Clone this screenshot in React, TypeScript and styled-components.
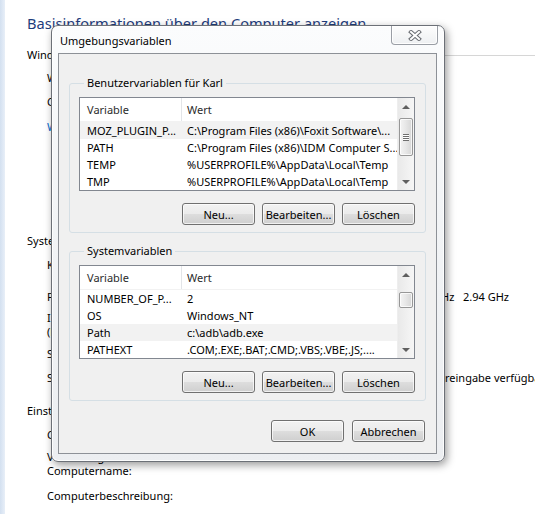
import React from 'react';
import styled, { createGlobalStyle } from 'styled-components';

const GlobalStyle = createGlobalStyle`
  html, body { margin: 0; padding: 0; background: #fff; }
  body {
    font-family: "Noto Sans", "Open Sans", sans-serif;
    font-size: 11px;
    color: #000;
  }
  * { box-sizing: border-box; }
`;

/* ---------- background: Control Panel "System" page ---------- */

const Page = styled.div`
  position: relative;
  display: flex;
  width: 535px;
  height: 514px;
  overflow: hidden;
  background: #fff;
`;

const NavStrip = styled.div`
  width: 5px;
  flex: none;
  background: linear-gradient(to right, #d3e0f0, #e8eff8);
`;

const Main = styled.main`
  flex: 1;
  min-width: 0;
  display: flex;
  flex-direction: column;
  padding: 13px 0 0 22px;
`;

const Heading = styled.h1`
  margin: 0;
  font-size: 14.6px;
  font-weight: normal;
  line-height: 20px;
  color: #1e3c7c;
  white-space: nowrap;
`;

const SectionTitle = styled.div<{ $mt: number; $rule?: boolean }>`
  margin-top: ${(p) => p.$mt}px;
  display: flex;
  align-items: center;
  line-height: 14px;
  white-space: nowrap;
  &::after {
    content: '';
    flex: 1;
    margin: 1px 0 0 8px;
    border-top: ${(p) => (p.$rule ? '1px solid #d6d6d6' : '0')};
  }
`;

const PlainLine = styled.div<{ $mt: number; $link?: boolean }>`
  margin-top: ${(p) => p.$mt}px;
  padding-left: 20px;
  line-height: 14px;
  white-space: nowrap;
  color: ${(p) => (p.$link ? '#0066cc' : '#000')};
`;

const InfoRow = styled.div<{ $mt: number }>`
  margin-top: ${(p) => p.$mt}px;
  padding-left: 20px;
  display: grid;
  grid-template-columns: 150px 312px;
  line-height: 14px;
`;

const Label = styled.div``;

const Value = styled.div<{ $end?: boolean; $link?: boolean; $indent?: number }>`
  display: flex;
  white-space: pre;
  padding-left: ${(p) => p.$indent ?? 0}px;
  justify-content: ${(p) => (p.$end ? 'flex-end' : 'flex-start')};
  color: ${(p) => (p.$link ? '#0066cc' : '#000')};
`;

/* ---------- dialog window ---------- */

const Window = styled.section`
  position: absolute;
  left: 51px;
  top: 25px;
  width: 394px;
  display: flex;
  flex-direction: column;
  padding: 0 7px 7px 6px;
  border: 1px solid #6c7077;
  border-radius: 7px;
  background: linear-gradient(180deg, #fbfcfd 0%, #f2f4f6 45%, #eceef1 100%);
  box-shadow: 2px 3px 9px rgba(0, 0, 0, 0.4), inset 0 0 0 1px rgba(255, 255, 255, 0.85);
`;

const TitleBar = styled.header`
  height: 27px;
  flex: none;
  display: flex;
  align-items: flex-start;
  justify-content: space-between;
`;

const Title = styled.div`
  padding: 8px 0 0 2px;
  line-height: 14px;
`;

const CloseButton = styled.div`
  width: 47px;
  height: 19px;
  margin-right: -1px;
  display: flex;
  align-items: center;
  justify-content: center;
  border: 1px solid #9a9ea5;
  border-top: 0;
  border-radius: 0 0 4px 4px;
  background: linear-gradient(180deg, #fdfdfd, #eef0f2);
  box-shadow: inset 0 0 0 1px rgba(255, 255, 255, 0.9);
`;

const Client = styled.div`
  display: flex;
  flex-direction: column;
  border: 1px solid #8d9197;
  background: #f0f0f0;
  padding: 22px 10px 11px 10px;
`;

const Group = styled.fieldset<{ $mt?: number }>`
  margin: ${(p) => p.$mt ?? 0}px 0 0 0;
  min-width: 0;
  padding: 7px 10px 7px 9px;
  border: 1px solid #d5dfe5;
  border-radius: 3px;
`;

const Legend = styled.legend`
  margin-left: 5px;
  padding: 0 3px;
  line-height: 14px;
`;

const ListView = styled.div`
  height: 94px;
  display: flex;
  border: 1px solid #828790;
  background: #fff;
`;

const ListBody = styled.div`
  flex: 1;
  min-width: 0;
  display: flex;
  flex-direction: column;
`;

const HeaderRow = styled.div`
  height: 24px;
  flex: none;
  display: grid;
  grid-template-columns: 101px 1fr;
  color: #2b2b2b;
  border-bottom: 1px solid #f2f2f2;
`;

const HeaderCell = styled.div<{ $first?: boolean }>`
  display: flex;
  align-items: center;
  padding-left: ${(p) => (p.$first ? 7 : 5)}px;
  border-left: ${(p) => (p.$first ? '0' : '1px solid #e3e5e8')};
`;

const Row = styled.div<{ $hl?: boolean }>`
  height: 17px;
  flex: none;
  display: grid;
  grid-template-columns: 101px 1fr;
  align-items: center;
  background: ${(p) => (p.$hl ? '#f2f2f2' : 'transparent')};
`;

const Cell = styled.div<{ $first?: boolean }>`
  padding-left: ${(p) => (p.$first ? 7 : 6)}px;
  white-space: nowrap;
  overflow: hidden;
`;

const ScrollBar = styled.div`
  width: 17px;
  flex: none;
  display: flex;
  flex-direction: column;
  background: linear-gradient(to right, #e9e9e9, #f6f6f6);
  border-left: 1px solid #eeeeee;
`;

const ArrowBox = styled.div<{ $dir: 'up' | 'down' }>`
  height: 17px;
  flex: none;
  display: flex;
  align-items: center;
  justify-content: center;
  &::before {
    content: '';
    width: 0;
    height: 0;
    border-left: 4px solid transparent;
    border-right: 4px solid transparent;
    ${(p) =>
      p.$dir === 'up'
        ? 'border-bottom: 4px solid #5f5f5f;'
        : 'border-top: 4px solid #5f5f5f;'}
  }
`;

const Track = styled.div`
  flex: 1;
  display: flex;
  flex-direction: column;
  padding: 0 1px;
`;

const Thumb = styled.div<{ $top: number; $h: number }>`
  margin-top: ${(p) => p.$top}px;
  height: ${(p) => p.$h}px;
  display: flex;
  align-items: center;
  justify-content: center;
  border: 1px solid #979797;
  border-radius: 2px;
  background: linear-gradient(to right, #f4f4f4, #e6e6e6 50%, #d6d6d6);
  box-shadow: inset 0 0 0 1px rgba(255, 255, 255, 0.75);
`;

const Grip = styled.span`
  width: 6px;
  height: 7px;
  background: repeating-linear-gradient(to bottom, #6e6e6e 0 1px, #ffffff 1px 2px);
`;

const ButtonRow = styled.div<{ $mt: number; $gap: number }>`
  margin-top: ${(p) => p.$mt}px;
  display: flex;
  justify-content: flex-end;
  gap: ${(p) => p.$gap}px;
`;

const Button = styled.button`
  width: 73px;
  height: 22px;
  padding: 0;
  font: inherit;
  color: #000;
  border: 1px solid #707070;
  border-radius: 3px;
  background: linear-gradient(180deg, #f2f2f2 0%, #ebebeb 48%, #dddddd 52%, #cfcfcf 100%);
  box-shadow: inset 0 0 0 1px rgba(255, 255, 255, 0.7);
`;

const BottomRow = styled(ButtonRow)`
  padding-right: 1px;
`;

type Pair = [string, string];

const userVars: Pair[] = [
  ['MOZ_PLUGIN_P...', 'C:\\Program Files (x86)\\Foxit Software\\...'],
  ['PATH', 'C:\\Program Files (x86)\\IDM Computer S...'],
  ['TEMP', '%USERPROFILE%\\AppData\\Local\\Temp'],
  ['TMP', '%USERPROFILE%\\AppData\\Local\\Temp'],
];

const sysVars: Pair[] = [
  ['NUMBER_OF_P...', '2'],
  ['OS', 'Windows_NT'],
  ['Path', 'c:\\adb\\adb.exe'],
  ['PATHEXT', '.COM;.EXE;.BAT;.CMD;.VBS;.VBE;.JS;....'],
];

function VarList({
  rows,
  hl,
  thumbTop,
  thumbH,
  grip,
}: {
  rows: Pair[];
  hl: number;
  thumbTop: number;
  thumbH: number;
  grip?: boolean;
}) {
  return (
    <ListView>
      <ListBody>
        <HeaderRow>
          <HeaderCell $first>Variable</HeaderCell>
          <HeaderCell>Wert</HeaderCell>
        </HeaderRow>
        {rows.map(([k, v], i) => (
          <Row key={k} $hl={i === hl}>
            <Cell $first>{k}</Cell>
            <Cell>{v}</Cell>
          </Row>
        ))}
      </ListBody>
      <ScrollBar>
        <ArrowBox $dir="up" />
        <Track>
          <Thumb $top={thumbTop} $h={thumbH}>
            {grip && <Grip />}
          </Thumb>
        </Track>
        <ArrowBox $dir="down" />
      </ScrollBar>
    </ListView>
  );
}

function CloseGlyph() {
  return (
    <svg width="14" height="11" viewBox="0 0 14 11">
      <path d="M3 2 L11 9 M11 2 L3 9" stroke="#6a6d73" strokeWidth="4" strokeLinecap="square" />
      <path d="M3 2 L11 9 M11 2 L3 9" stroke="#ffffff" strokeWidth="2" strokeLinecap="square" />
    </svg>
  );
}

export default function App() {
  return (
    <>
      <GlobalStyle />
      <Page>
        <NavStrip />
        <Main>
          <Heading>Basisinformationen über den Computer anzeigen</Heading>
          <SectionTitle $mt={15} $rule>
            Windows-Edition
          </SectionTitle>
          <PlainLine $mt={9}>Windows 7 Home Premium</PlainLine>
          <PlainLine $mt={10}>Copyright © 2009 Microsoft Corporation. Alle Rechte vorbehalten.</PlainLine>
          <PlainLine $mt={11} $link>
            Weitere Features mit einer neuen Windows 7-Edition abrufen
          </PlainLine>

          <SectionTitle $mt={100}>System</SectionTitle>
          <InfoRow $mt={10}>
            <Label>Klassifikation:</Label>
            <Value $link>Leistungsindex für Windows</Value>
          </InfoRow>
          <InfoRow $mt={18}>
            <Label>Prozessor:</Label>
            <Value $end>Intel(R) Core(TM)2 Duo CPU     E7500  @ 2.93GHz   2.94 GHz</Value>
          </InfoRow>
          <InfoRow $mt={7}>
            <Label>
              Installierter Arbeitsspeicher
              <br />
              (RAM):
            </Label>
            <Value>4,00 GB</Value>
          </InfoRow>
          <InfoRow $mt={8}>
            <Label>Systemtyp:</Label>
            <Value>64 Bit-Betriebssystem</Value>
          </InfoRow>
          <InfoRow $mt={10}>
            <Label>Stift- und Fingereingabe:</Label>
            <Value $indent={26}>Für diese Anzeige ist keine Stift- oder Fingereingabe verfügbar.</Value>
          </InfoRow>

          <SectionTitle $mt={19}>Einstellungen für Computernamen, Domäne und Arbeitsgruppe</SectionTitle>
          <InfoRow $mt={10}>
            <Label>Computername:</Label>
            <Value>Karl-PC</Value>
          </InfoRow>
          <InfoRow $mt={8}>
            <Label>
              Vollständiger
              <br />
              Computername:
            </Label>
            <Value>Karl-PC</Value>
          </InfoRow>
          <InfoRow $mt={11}>
            <Label>Computerbeschreibung:</Label>
            <Value />
          </InfoRow>
        </Main>

        <Window>
          <TitleBar>
            <Title>Umgebungsvariablen</Title>
            <CloseButton>
              <CloseGlyph />
            </CloseButton>
          </TitleBar>
          <Client>
            <Group>
              <Legend>Benutzervariablen für Karl</Legend>
              <VarList rows={userVars} hl={0} thumbTop={3} thumbH={38} grip />
              <ButtonRow $mt={12} $gap={7}>
                <Button>Neu...</Button>
                <Button>Bearbeiten...</Button>
                <Button>Löschen</Button>
              </ButtonRow>
            </Group>
            <Group $mt={11}>
              <Legend>Systemvariablen</Legend>
              <VarList rows={sysVars} hl={2} thumbTop={9} thumbH={16} />
              <ButtonRow $mt={12} $gap={7}>
                <Button>Neu...</Button>
                <Button>Bearbeiten...</Button>
                <Button>Löschen</Button>
              </ButtonRow>
            </Group>
            <BottomRow $mt={19} $gap={8}>
              <Button>OK</Button>
              <Button>Abbrechen</Button>
            </BottomRow>
          </Client>
        </Window>
      </Page>
    </>
  );
}
